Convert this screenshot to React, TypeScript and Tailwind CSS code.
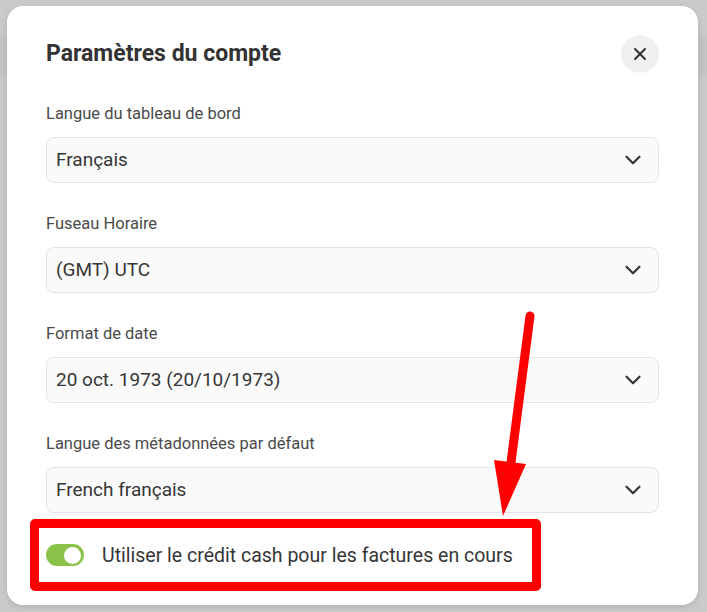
import { ChevronDown, X } from 'lucide-react';

const fields = [
  { label: 'Langue du tableau de bord', value: 'Français' },
  { label: 'Fuseau Horaire', value: '(GMT) UTC' },
  { label: 'Format de date', value: '20 oct. 1973 (20/10/1973)' },
  { label: 'Langue des métadonnées par défaut', value: 'French français' },
];

function SelectField({ label, value }: { label: string; value: string }) {
  return (
    <div className="flex flex-col">
      <label className="text-[16.5px] leading-[20px] text-[#4a4a4a]">{label}</label>
      <div className="mt-[13px] h-[46px] flex items-center justify-between rounded-[8px] border border-[#e4e4e4] bg-[#fafafa] pl-[9px] pr-[12px]">
        <span className="text-[19px] text-[#363636]">{value}</span>
        <ChevronDown size={26} strokeWidth={2} className="text-[#333]" />
      </div>
    </div>
  );
}

export default function App() {
  return (
    <div
      className="relative h-[612px] w-[707px] overflow-hidden bg-[#cacaca] pt-[6px] pl-[7px]"
      style={{ fontFamily: 'Roboto, "Noto Sans", sans-serif' }}
    >
      <div className="pointer-events-none absolute inset-x-0 top-[36px] h-[40px] bg-[#c4c4c4]" />
      <div className="relative h-[599px] w-[691px] rounded-[16px] bg-white px-[39px] pt-[29px] shadow-[0_2px_6px_rgba(0,0,0,0.12)]">
        <div className="flex h-[38px] items-center justify-between">
          <h2 className="text-[23px] font-bold text-[#333]">Paramètres du compte</h2>
          <button className="flex h-[38px] w-[38px] items-center justify-center rounded-full bg-[#f0f0f0]">
            <X size={20} strokeWidth={2.4} className="text-[#333]" />
          </button>
        </div>

        <div className="mt-[31px] flex flex-col gap-[31px]">
          {fields.map((f) => (
            <SelectField key={f.label} label={f.label} value={f.value} />
          ))}
          <div className="flex h-[22px] items-center">
            <div className="flex h-[22px] w-[38px] items-center justify-end rounded-full bg-[#8bc34a] pr-[3px]">
              <div className="h-[17px] w-[17px] rounded-full bg-white" />
            </div>
            <span className="ml-[18px] mt-[2px] text-[19.5px] text-[#363636]">
              Utiliser le crédit cash pour les factures en cours
            </span>
          </div>
        </div>

        {/* annotation box */}
        <div className="absolute left-[23px] top-[513px] h-[72px] w-[511px] rounded-[5px] border-[9px] border-[#ff0000]" />
        {/* annotation arrow */}
        <svg className="absolute left-0 top-0" width="691" height="599" viewBox="7 6 691 599">
          <line x1="530" y1="316" x2="510" y2="470" stroke="#ff0000" strokeWidth="9" strokeLinecap="round" />
          <polygon points="494,460 526,464 503,516" fill="#ff0000" />
        </svg>
      </div>
    </div>
  );
}
